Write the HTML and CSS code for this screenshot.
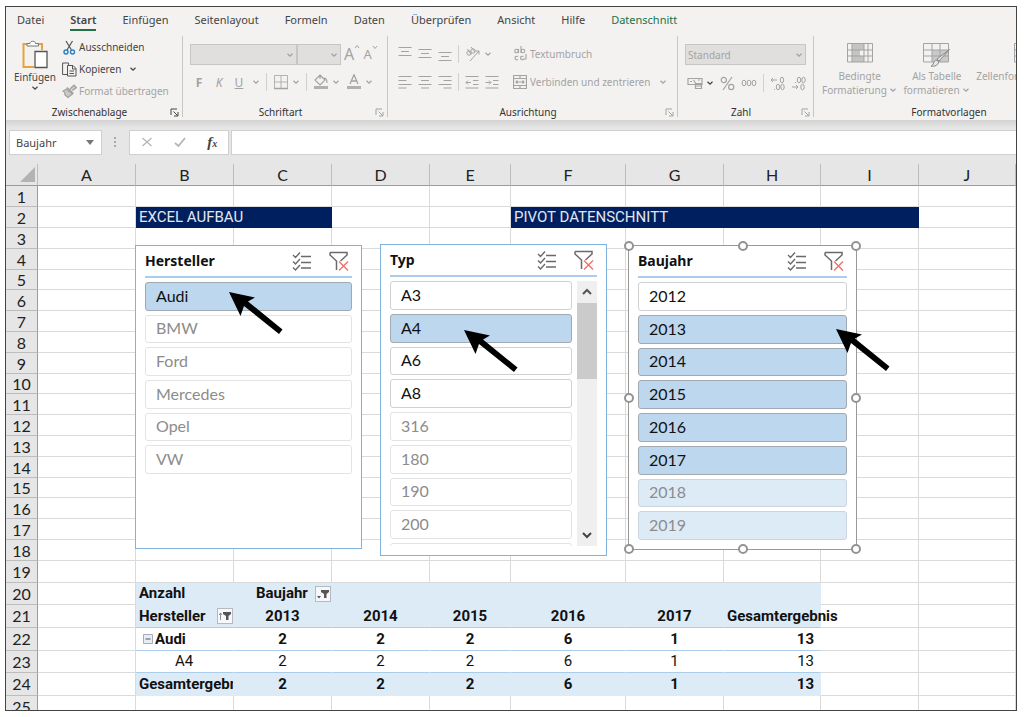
FILE: index.html
```html
<!DOCTYPE html>
<html lang="de">
<head>
    <meta charset="UTF-8">
    <meta name="viewport" content="width=device-width, initial-scale=1.0">
    <title>Pivot Datenschnitt</title>
    <link rel="stylesheet" href="styles.css">
</head>
<body>

    <!-- Shared icons -->
    <svg class="defs" width="0" height="0">
        <symbol id="chev" viewBox="0 0 8 8"><path d="M1.5 2.8 4 5.2 6.500 2.800" fill="none" stroke="currentColor" stroke-width="1.3"/></symbol>
        <symbol id="launch" viewBox="0 0 9 9"><path d="M1 7V1h6M3.500 3.500 7.500 7.500M8 4v4H4" fill="none" stroke="currentColor"/></symbol>
        <symbol id="multi" viewBox="0 0 20 20"><path d="M1 4l2.500 2.500L8 1.500M1 10.500 3.500 13 8 8M1 16.500 3.500 19 8 14M9 5.500h10M9 11.500h10M9 17h10" fill="none" stroke="#6a6a6a" stroke-width="1.400"/></symbol>
        <symbol id="clear" viewBox="0 0 20 20"><path d="M1 1.500h17v2.500l-6.500 6M1 1.500V4l6.500 6v9" fill="none" stroke="#6a6a6a" stroke-width="1.500"/><path d="M10 10.500l9 9M19 10.500l-9 9" stroke="#f4706a" stroke-width="1.400"/></symbol>
        <symbol id="arrow" viewBox="0 0 54 43"><path d="M0 0 26 5.500 19 9.500 53.500 37.500 50 42 15 14 11.500 24Z" fill="#000"/></symbol>
    </svg>

    <div class="window">
        <nav class="tabs">
            <a href="#">Datei</a>
            <a href="#" class="active">Start</a>
            <a href="#">Einfügen</a>
            <a href="#">Seitenlayout</a>
            <a href="#">Formeln</a>
            <a href="#">Daten</a>
            <a href="#">Überprüfen</a>
            <a href="#">Ansicht</a>
            <a href="#">Hilfe</a>
            <a href="#" class="context">Datenschnitt</a>
        </nav>

        <div class="ribbon">
            <section class="group clipboard">
                <div class="tools">
                    <button type="button" class="big-button dark">
                        <svg width="26" height="30" viewBox="0 0 26 30"><path d="M6 4H1.500v23H12M15 4h5v6" fill="none" stroke="#e8a33d" stroke-width="2"/><path d="M5 6V3.500h3C8 .5 13.500.5 13.500 3.500h3V6Z" fill="#fff" stroke="#777"/><path d="M13 11.500h12v16H13z" fill="#fff" stroke="#555" stroke-width="1.300"/></svg>
                        <span>Einfügen</span>
                        <svg width="8" height="8"><use href="#chev"/></svg>
                    </button>
                    <div class="button-list">
                        <button type="button" class="dark"><svg width="15" height="15" viewBox="0 0 15 15"><path d="M4 1l5.500 9M10.500 1 5 10" stroke="#555" stroke-width="1.200"/><g fill="none" stroke="#2b7fc3" stroke-width="1.400"><circle cx="4" cy="12" r="2"/><circle cx="10.500" cy="12" r="2"/></g></svg>Ausschneiden</button>
                        <button type="button" class="dark"><svg width="15" height="15" viewBox="0 0 15 15"><path d="M5.500 12.500H.6V1h6v2" fill="none" stroke="#555"/><path d="M5.500 3.500h5.500l3 3v7.500H5.500zM10.500 4v3H14M7.500 9H12M7.500 11.500H12" fill="none" stroke="#555"/></svg>Kopieren<svg class="drop" width="8" height="8"><use href="#chev"/></svg></button>
                        <button type="button" disabled><svg width="15" height="15" viewBox="0 0 15 15"><path d="M8 5l4-4 2.500 2.500-4 3M5 3.500l6.500 6M4.500 5 1 7c2 .5 1.500 2 2 4l3 2.500 4.500-3.500Z" fill="#c8c8c8" stroke="#a0a0a0" stroke-width="1.200"/></svg>Format übertragen</button>
                    </div>
                </div>
                <footer class="dark-launch"><span>Zwischenablage</span><svg width="9" height="9"><use href="#launch"/></svg></footer>
            </section>

            <section class="group font">
                <div class="tools rows">
                    <div class="line flush">
                        <div class="select-box font-name"><select disabled aria-label="Schriftart"><option></option></select><svg width="8" height="8"><use href="#chev"/></svg></div>
                        <div class="select-box font-size"><select disabled aria-label="Schriftgrad"><option></option></select><svg width="8" height="8"><use href="#chev"/></svg></div>
                        <button type="button" class="grow" disabled>A<svg width="6" height="6" viewBox="0 0 6 6"><path d="M1 4l2-2.500L5 4" fill="none" stroke="currentColor"/></svg></button>
                        <button type="button" class="grow small" disabled>A<svg width="6" height="6" viewBox="0 0 6 6"><path d="M1 2l2 2.500L5 2" fill="none" stroke="currentColor"/></svg></button>
                    </div>
                    <div class="line">
                        <button type="button" class="letter bold" disabled>F</button>
                        <button type="button" class="letter italic" disabled>K</button>
                        <button type="button" class="letter underline" disabled>U</button>
                        <svg width="8" height="8"><use href="#chev"/></svg>
                        <i class="sep"></i>
                        <button type="button" class="split" disabled><svg width="16" height="16" viewBox="0 0 16 16"><path d="M1.500 1.500h13v13h-13zM8 1.500v13M1.500 8h13" fill="none" stroke="currentColor" stroke-width=".8"/><path d="M1 14.500h14" stroke="currentColor" stroke-width="1.500"/></svg><svg width="8" height="8"><use href="#chev"/></svg></button>
                        <i class="sep"></i>
                        <button type="button" class="split" disabled><svg width="16" height="16" viewBox="0 0 16 16"><path d="M7 1l5 5-5 5-5-5ZM7 1v4M11 4c2 0 3 2 3 5" fill="none" stroke="currentColor" stroke-width="1.200"/><path d="M1 12h14v3H1z" fill="#b0b0b0"/></svg><svg width="8" height="8"><use href="#chev"/></svg></button>
                        <button type="button" class="split" disabled><svg width="16" height="16" viewBox="0 0 16 16"><path d="M4 10 8 .8 12 10M5.500 7h5" fill="none" stroke="currentColor" stroke-width="1.300"/><path d="M1 12h14v3H1z" fill="#b0b0b0"/></svg><svg width="8" height="8"><use href="#chev"/></svg></button>
                    </div>
                </div>
                <footer><span>Schriftart</span><svg width="9" height="9"><use href="#launch"/></svg></footer>
            </section>

            <section class="group align">
                <div class="tools">
                    <div class="rows">
                        <div class="line">
                            <svg width="14" height="16" viewBox="0 0 14 16"><path d="M.5 1.500h13M3 5.500h8M.5 9.500h13" stroke="currentColor"/></svg>
                            <svg width="14" height="16" viewBox="0 0 14 16"><path d="M.5 3.500h13M3 7.500h8M.5 11.500h13" stroke="currentColor"/></svg>
                            <svg width="14" height="16" viewBox="0 0 14 16"><path d="M.5 6.500h13M3 10.500h8M.5 14.500h13" stroke="currentColor"/></svg>
                            <i class="sep"></i>
                            <button type="button" class="split" disabled><svg width="16" height="16" viewBox="0 0 16 16"><g fill="none" stroke="currentColor"><circle cx="4" cy="7" r="2.200"/><path d="M2.500 3 6 8.500"/><circle cx="8" cy="5" r="2.200"/><path d="M6 1l4 5M5 15 14 5M10.500 5H14v3.500"/></g></svg><svg width="8" height="8"><use href="#chev"/></svg></button>
                        </div>
                        <div class="line">
                            <svg width="14" height="14" viewBox="0 0 14 14"><path d="M.5 1.500h13M.5 5.500h8M.5 9.500h13M.5 13h8" stroke="currentColor"/></svg>
                            <svg width="14" height="14" viewBox="0 0 14 14"><path d="M.5 1.500h13M3 5.500h8M.5 9.500h13M3 13h8" stroke="currentColor"/></svg>
                            <svg width="14" height="14" viewBox="0 0 14 14"><path d="M.5 1.500h13M5.500 5.500h8M.5 9.500h13M5.500 13h8" stroke="currentColor"/></svg>
                            <i class="sep"></i>
                            <svg width="14" height="14" viewBox="0 0 14 14"><path d="M.5 1.500h13M8 5.500h5.500M8 9.500h5.500M.5 13h13M6 7.500H1M3 5.500l-2 2 2 2" fill="none" stroke="currentColor"/></svg>
                            <svg width="14" height="14" viewBox="0 0 14 14"><path d="M.5 1.500h13M8 5.500h5.500M8 9.500h5.500M.5 13h13M.5 7.500h5M4 5.500l2 2-2 2" fill="none" stroke="currentColor"/></svg>
                        </div>
                    </div>
                    <i class="sep high"></i>
                    <div class="rows wide">
                        <button type="button" class="line" disabled><svg width="14" height="16" viewBox="0 0 14 16"><g fill="none" stroke="currentColor" stroke-width="1.100"><circle cx="3.500" cy="5" r="1.800"/><path d="M5.500 3v4M8 0v7"/><circle cx="10" cy="5" r="1.800"/><path d="M5 10.500c-4-1.500-4 4.500 0 3M10.500 10.500c-4-1.500-4 4.500 0 3M13 8v5H9.500"/></g></svg>Textumbruch</button>
                        <button type="button" class="line" disabled><svg width="14" height="14" viewBox="0 0 14 14"><path d="M.5.5h13v13H.5zM.5 3.500h13M.5 10.500h13M7 .5v3M7 10.500v3M3 7h8M4.500 5.500 3 7l1.500 1.500M9.500 5.500 11 7 9.500 8.500" fill="none" stroke="currentColor" stroke-width="1.200"/></svg>Verbinden und zentrieren<svg class="drop" width="8" height="8"><use href="#chev"/></svg></button>
                    </div>
                </div>
                <footer><span>Ausrichtung</span><svg width="9" height="9"><use href="#launch"/></svg></footer>
            </section>

            <section class="group number">
                <div class="tools rows">
                    <div class="select-box number-format"><select disabled aria-label="Zahlenformat"><option>Standard</option></select><svg width="8" height="8"><use href="#chev"/></svg></div>
                    <div class="line">
                        <button type="button" class="split" disabled><svg width="16" height="14" viewBox="0 0 16 14"><path d="M1 2.500h14v6H1zM3 5.500h2M6.500 4l2 3M11 4h2M8.500 7.500h6v5h-6zM8.500 10h6" fill="none" stroke="currentColor" stroke-width="1.200"/></svg><svg class="dark" width="8" height="8"><use href="#chev"/></svg></button>
                        <svg width="15" height="15" viewBox="0 0 15 15"><g fill="none" stroke="currentColor" stroke-width="1.200"><circle cx="3.800" cy="4" r="2.600"/><circle cx="11.200" cy="11" r="2.600"/><path d="M12 1 3 14"/></g></svg>
                        <svg width="16" height="8" viewBox="0 0 16 8"><g fill="none" stroke="currentColor"><ellipse cx="3" cy="4" rx="1.900" ry="2.800"/><ellipse cx="8" cy="4" rx="1.900" ry="2.800"/><ellipse cx="13" cy="4" rx="1.900" ry="2.800"/></g></svg>
                        <i class="sep"></i>
                        <svg width="15" height="15" viewBox="0 0 15 15"><g fill="none" stroke="currentColor"><path d="M7 4H1M3 2 1 4l2 2M4 13.500h1"/><ellipse cx="12" cy="4" rx="1.700" ry="2.800"/><ellipse cx="8" cy="11" rx="1.700" ry="2.800"/><ellipse cx="12.500" cy="11" rx="1.700" ry="2.800"/></g></svg>
                        <svg width="15" height="15" viewBox="0 0 15 15"><g fill="none" stroke="currentColor"><path d="M1 11h6M5 9l2 2-2 2M4 6.500h1"/><ellipse cx="8" cy="4" rx="1.700" ry="2.800"/><ellipse cx="12.500" cy="4" rx="1.700" ry="2.800"/><ellipse cx="11.500" cy="11" rx="1.700" ry="2.800"/></g></svg>
                    </div>
                </div>
                <footer><span>Zahl</span><svg width="9" height="9"><use href="#launch"/></svg></footer>
            </section>

            <section class="group styles">
                <div class="tools">
                    <button type="button" class="big-button" disabled>
                        <svg width="26" height="26" viewBox="0 0 26 26"><path d="M5 3h12v6H5zM5 9h8v6H5zM5 15h12v6H5z" fill="#c4c4c4"/><path d="M.5 2.500h25v18.500H.5zM.5 9h25M.5 15h25M5 2.500V21M17 2.500V21M21 2.500V21" fill="none" stroke="currentColor"/></svg>
                        <span>Bedingte<br>Formatierung <svg width="8" height="8"><use href="#chev"/></svg></span>
                    </button>
                    <button type="button" class="big-button" disabled>
                        <svg width="28" height="26" viewBox="0 0 28 26"><path d="M9 9h16v12H9z" fill="#c9c9c9"/><path d="M.5 2.500h25V21H.5zM.5 9h25M.5 15h25M9 2.500V21M17 2.500V21" fill="none" stroke="currentColor"/><path d="M26.500 8.500 16 20l-2-2ZM8 25c3 0 2-6 6-6l1.500 2c0 3-4 5-7.500 4Z" fill="#e8e8e8" stroke="#888"/></svg>
                        <span>Als Tabelle<br>formatieren <svg width="8" height="8"><use href="#chev"/></svg></span>
                    </button>
                    <button type="button" class="big-button" disabled>
                        <svg width="26" height="26" viewBox="0 0 26 26"><path d="M.5 2.500h25V21H.5zM.5 9h25M.5 15h25M5 2.500V21M21 2.500V21" fill="none" stroke="currentColor"/></svg>
                        <span>Zellenformatvorlagen</span>
                    </button>
                </div>
                <footer><span>Formatvorlagen</span></footer>
            </section>
        </div>

        <div class="formula-bar">
            <label class="name-box">
                <input type="text" value="Baujahr" aria-label="Namenfeld">
                <svg width="8" height="5" viewBox="0 0 8 5"><path d="M0 0h8L4 5Z" fill="#777"/></svg>
            </label>
            <svg class="dots" width="3" height="12" viewBox="0 0 3 12"><path d="M0 1h2v2H0zM0 5h2v2H0zM0 9h2v2H0z" fill="#aaa"/></svg>
            <div class="formula-buttons">
                <button type="button" aria-label="Abbrechen"><svg width="12" height="12" viewBox="0 0 12 12"><path d="M1.500 2l9 8M10.500 2l-9 8" stroke="#b5b5b5" stroke-width="1.300"/></svg></button>
                <button type="button" aria-label="Eingeben"><svg width="12" height="12" viewBox="0 0 12 12"><path d="M1 7l3.500 3L11 2" fill="none" stroke="#b5b5b5" stroke-width="1.800"/></svg></button>
                <button type="button" class="fx">f<sub>x</sub></button>
            </div>
            <input type="text" class="formula" aria-label="Bearbeitungsleiste">
        </div>

        <div class="sheet">
            <table>
                <colgroup>
                    <col class="c-num"><col class="c-std"><col class="c-std"><col class="c-std"><col class="c-std">
                    <col class="c-e"><col class="c-f"><col class="c-std"><col class="c-h"><col class="c-std"><col>
                </colgroup>
                <thead>
                    <tr><th class="corner"><svg width="15" height="15" viewBox="0 0 15 15"><path d="M15 0v15H0Z" fill="#b3b3b3"/></svg></th><th>A</th><th>B</th><th>C</th><th>D</th><th>E</th><th>F</th><th>G</th><th>H</th><th>I</th><th>J</th></tr>
                </thead>
                <tbody>
                    <tr><th>1</th><td></td><td></td><td></td><td></td><td></td><td></td><td></td><td></td><td></td><td></td></tr>
                    <tr><th>2</th><td></td><td colspan="2" class="banner">EXCEL AUFBAU</td><td></td><td></td><td colspan="4" class="banner">PIVOT DATENSCHNITT</td><td></td></tr>
                    <tr><th>3</th><td></td><td></td><td></td><td></td><td></td><td></td><td></td><td></td><td></td><td></td></tr>
                    <tr><th>4</th><td></td><td></td><td></td><td></td><td></td><td></td><td></td><td></td><td></td><td></td></tr>
                    <tr><th>5</th><td></td><td></td><td></td><td></td><td></td><td></td><td></td><td></td><td></td><td></td></tr>
                    <tr><th>6</th><td></td><td></td><td></td><td></td><td></td><td></td><td></td><td></td><td></td><td></td></tr>
                    <tr><th>7</th><td></td><td></td><td></td><td></td><td></td><td></td><td></td><td></td><td></td><td></td></tr>
                    <tr><th>8</th><td></td><td></td><td></td><td></td><td></td><td></td><td></td><td></td><td></td><td></td></tr>
                    <tr><th>9</th><td></td><td></td><td></td><td></td><td></td><td></td><td></td><td></td><td></td><td></td></tr>
                    <tr><th>10</th><td></td><td></td><td></td><td></td><td></td><td></td><td></td><td></td><td></td><td></td></tr>
                    <tr><th>11</th><td></td><td></td><td></td><td></td><td></td><td></td><td></td><td></td><td></td><td></td></tr>
                    <tr><th>12</th><td></td><td></td><td></td><td></td><td></td><td></td><td></td><td></td><td></td><td></td></tr>
                    <tr><th>13</th><td></td><td></td><td></td><td></td><td></td><td></td><td></td><td></td><td></td><td></td></tr>
                    <tr><th>14</th><td></td><td></td><td></td><td></td><td></td><td></td><td></td><td></td><td></td><td></td></tr>
                    <tr><th>15</th><td></td><td></td><td></td><td></td><td></td><td></td><td></td><td></td><td></td><td></td></tr>
                    <tr><th>16</th><td></td><td></td><td></td><td></td><td></td><td></td><td></td><td></td><td></td><td></td></tr>
                    <tr><th>17</th><td></td><td></td><td></td><td></td><td></td><td></td><td></td><td></td><td></td><td></td></tr>
                    <tr><th>18</th><td></td><td></td><td></td><td></td><td></td><td></td><td></td><td></td><td></td><td></td></tr>
                    <tr class="mid"><th>19</th><td></td><td></td><td></td><td></td><td></td><td></td><td></td><td></td><td></td><td></td></tr>
                    <tr class="mid pivot head top"><th>20</th><td></td><td>Anzahl</td><td><div class="field">Baujahr <button type="button" aria-label="Baujahr filtern"><svg width="12" height="10" viewBox="0 0 12 10"><path d="M4 1h8v2L9.500 5v4H7V5L4 3ZM0 7h4L2 9.500Z" fill="#555"/></svg></button></div></td><td></td><td></td><td></td><td></td><td></td><td></td><td></td></tr>
                    <tr class="tall pivot head"><th>21</th><td></td><td><div class="field">Hersteller <button type="button" aria-label="Hersteller filtern"><svg width="12" height="10" viewBox="0 0 12 10"><path d="M4 1h8v2L9.500 5v4H7V5L4 3Z" fill="#555"/><path d="M1.500 9V2M0 4l1.500-2L3 4" fill="none" stroke="#777" stroke-width=".8"/></svg></button></div></td><td>2013</td><td>2014</td><td>2015</td><td>2016</td><td>2017</td><td class="spill">Gesamtergebnis</td><td></td><td></td></tr>
                    <tr class="tall pivot strong"><th>22</th><td></td><td><button type="button" class="collapse" aria-label="Reduzieren"><svg width="10" height="10" viewBox="0 0 10 10"><path d="M.5.5h9v9h-9z" fill="#e8ecf5" stroke="#a5acbd"/><path d="M2.500 5h5" stroke="#44546a"/></svg></button>Audi</td><td>2</td><td>2</td><td>2</td><td>6</td><td>1</td><td>13</td><td></td><td></td></tr>
                    <tr class="mid pivot"><th>23</th><td></td><td class="indent">A4</td><td>2</td><td>2</td><td>2</td><td>6</td><td>1</td><td>13</td><td></td><td></td></tr>
                    <tr class="tall pivot head total"><th>24</th><td></td><td>Gesamtergebnis</td><td>2</td><td>2</td><td>2</td><td>6</td><td>1</td><td>13</td><td></td><td></td></tr>
                    <tr class="tall"><th>25</th><td></td><td></td><td></td><td></td><td></td><td></td><td></td><td></td><td></td><td></td></tr>
                </tbody>
            </table>

            <!-- Floating slicers -->
            <div class="slicer slicer-maker">
                <header><h2>Hersteller</h2><button type="button" aria-label="Mehrfachauswahl"><svg width="20" height="20"><use href="#multi"/></svg></button><button type="button" aria-label="Filter löschen"><svg width="20" height="20"><use href="#clear"/></svg></button></header>
                <div class="items">
                    <button type="button" class="on">Audi</button>
                    <button type="button" class="empty">BMW</button>
                    <button type="button" class="empty">Ford</button>
                    <button type="button" class="empty">Mercedes</button>
                    <button type="button" class="empty">Opel</button>
                    <button type="button" class="empty">VW</button>
                </div>
            </div>

            <div class="slicer slicer-type">
                <header><h2>Typ</h2><button type="button" aria-label="Mehrfachauswahl"><svg width="20" height="20"><use href="#multi"/></svg></button><button type="button" aria-label="Filter löschen"><svg width="20" height="20"><use href="#clear"/></svg></button></header>
                <div class="scroll-area">
                    <div class="items">
                        <button type="button">A3</button>
                        <button type="button" class="on">A4</button>
                        <button type="button">A6</button>
                        <button type="button">A8</button>
                        <button type="button" class="empty">316</button>
                        <button type="button" class="empty">180</button>
                        <button type="button" class="empty">190</button>
                        <button type="button" class="empty">200</button>
                        <button type="button" class="empty" aria-label="weitere"></button>
                    </div>
                    <div class="scrollbar">
                        <button type="button" aria-label="Nach oben"><svg width="12" height="12" viewBox="0 0 12 12"><path d="M2 8l4-4 4 4" fill="none" stroke="#555" stroke-width="2"/></svg></button>
                        <div class="thumb"></div>
                        <button type="button" aria-label="Nach unten"><svg width="12" height="12" viewBox="0 0 12 12"><path d="M2 4l4 4 4-4" fill="none" stroke="#444" stroke-width="2"/></svg></button>
                    </div>
                </div>
            </div>

            <div class="slicer slicer-year">
                <header><h2>Baujahr</h2><button type="button" aria-label="Mehrfachauswahl"><svg width="20" height="20"><use href="#multi"/></svg></button><button type="button" aria-label="Filter löschen"><svg width="20" height="20"><use href="#clear"/></svg></button></header>
                <div class="items">
                    <button type="button">2012</button>
                    <button type="button" class="on">2013</button>
                    <button type="button" class="on">2014</button>
                    <button type="button" class="on">2015</button>
                    <button type="button" class="on">2016</button>
                    <button type="button" class="on">2017</button>
                    <button type="button" class="on empty">2018</button>
                    <button type="button" class="on empty">2019</button>
                </div>
                <i class="handle nw"></i><i class="handle n"></i><i class="handle ne"></i>
                <i class="handle w"></i><i class="handle e"></i>
                <i class="handle sw"></i><i class="handle s"></i><i class="handle se"></i>
            </div>

            <svg class="pointer pointer-maker" width="54" height="43"><use href="#arrow"/></svg>
            <svg class="pointer pointer-type" width="54" height="43"><use href="#arrow"/></svg>
            <svg class="pointer pointer-year" width="54" height="43"><use href="#arrow"/></svg>
        </div>
    </div>

</body>
</html>
```

FILE: styles.css
```css
* {
    box-sizing: border-box;
}

body {
    margin: 0;
    padding: 6px 7px 6px 5px;
    height: 100vh;
    background: #fff;
    font-family: "Noto Sans", sans-serif;
    font-size: 10px;
    color: #444;
}

button,
input,
select {
    font: inherit;
    color: inherit;
    margin: 0;
    padding: 0;
    border: none;
    background: none;
}

svg {
    display: block;
    flex: none;
}

.defs {
    position: absolute;
}

.window {
    display: flex;
    flex-direction: column;
    height: 100%;
    border: 1px solid #444;
    overflow: hidden;
}

/* Tabs */
.tabs {
    display: flex;
    flex: none;
    gap: 26px;
    height: 29px;
    padding: 4px 11px;
    background: #f3f2f1;
    font-size: 11px;
    line-height: 18px;
}

.tabs a {
    color: #444;
    text-decoration: none;
    height: 20px;
}

.tabs .active {
    font-weight: 600;
    border-bottom: 2px solid #217346;
}

.tabs .context {
    color: #217346;
}

/* Ribbon */
.ribbon {
    display: flex;
    flex: none;
    height: 84px;
    background: #f3f2f1;
    color: #a3a3a3;
    overflow: hidden;
}

.group {
    display: flex;
    flex-direction: column;
    flex: none;
    height: 81px;
    border-right: 1px solid #c8c6c4;
}

.clipboard { width: 177px; }
.font { width: 205px; }
.align { width: 290px; }
.number { width: 136px; }
.styles { width: 271px; }

.group footer {
    display: flex;
    align-items: center;
    height: 10px;
    padding: 0 3px;
    line-height: 10px;
}

.group footer span {
    flex: 1;
    text-align: center;
    color: #333;
}

.dark,
.dark-launch {
    color: #444;
}

.tools {
    display: flex;
    flex: 1;
    padding: 0 8px;
}

.rows {
    display: flex;
    flex-direction: column;
    gap: 8px;
    padding-top: 8px;
}

.tools.rows {
    padding: 8px 7px 0;
}

.align .tools {
    padding: 0 10px;
}

.line {
    display: flex;
    flex: none;
    align-items: center;
    gap: 6px;
    height: 20px;
    white-space: nowrap;
}

.tools > .line:last-child {
    padding-left: 2px;
}

.flush {
    gap: 0;
}

.sep {
    width: 1px;
    height: 18px;
    background: #d2d0ce;
}

.sep.high {
    height: 54px;
    margin: 6px 6px 0 8px;
}

.big-button {
    display: flex;
    flex-direction: column;
    align-items: center;
    line-height: 14px;
    white-space: nowrap;
}

.big-button span svg {
    display: inline-block;
}

.clipboard .big-button {
    width: 42px;
    padding-top: 4px;
}

.clipboard .button-list {
    padding-left: 6px;
}

.button-list button {
    display: flex;
    align-items: center;
    gap: 2px;
    height: 22px;
    white-space: nowrap;
}

.drop {
    margin-left: 6px;
}

.select-box {
    display: flex;
    flex: none;
    position: relative;
    height: 21px;
    background: #e0dfde;
    border: 1px solid #c8c6c4;
}

.select-box select {
    appearance: none;
    width: 100%;
    padding: 0 2px;
    opacity: 1;
}

.select-box svg {
    position: absolute;
    right: 2px;
    top: 6px;
}

.font-name { width: 107px; }
.font-size { width: 44px; }
.number-format { width: 121px; }

.grow {
    display: flex;
    width: 20px;
    padding-left: 3px;
    font-size: 16px;
    line-height: 20px;
}

.grow.small {
    font-size: 13px;
}

.letter {
    width: 14px;
    font-size: 12px;
}

.bold { font-weight: bold; }
.italic { font-style: italic; }
.underline { text-decoration: underline; }

.split {
    display: flex;
    align-items: center;
    gap: 3px;
}

.wide .line {
    gap: 3px;
}

.styles .tools {
    gap: 6px;
}

.styles .big-button {
    padding-top: 5px;
}

.styles .big-button > svg {
    margin-bottom: 2px;
}

/* Formula bar */
.formula-bar {
    display: flex;
    flex: none;
    align-items: center;
    height: 44px;
    background: linear-gradient(#d2d2d2, #e6e6e6 8px);
    padding-left: 3px;
}

.name-box,
.formula-buttons,
.formula {
    display: flex;
    align-items: center;
    height: 25px;
    background: #fff;
    border: 1px solid #cfcfcf;
}

.name-box {
    width: 93px;
    padding: 0 7px 0 6px;
    font-size: 11px;
}

.name-box input {
    flex: 1;
    min-width: 0;
}

.dots {
    margin: 0 12px;
}

.formula-buttons {
    width: 100px;
    justify-content: space-around;
}

.fx {
    font: italic bold 15px "Liberation Serif", serif;
}

.fx sub {
    font-size: 10px;
    vertical-align: baseline;
}

.formula {
    flex: 1;
    margin-left: 2px;
    border-right: none;
}

/* Sheet */
.sheet {
    position: relative;
    flex: 1;
    min-height: 0;
    overflow: hidden;
}

table {
    width: 100%;
    table-layout: fixed;
    border-collapse: separate;
    border-spacing: 0;
    color: #111;
}

.c-num { width: 32px; }
.c-std { width: 98px; }
.c-e { width: 81px; }
.c-f { width: 115px; }
.c-h { width: 97px; }

th,
td {
    height: 21px;
    padding: 0;
    line-height: 19px;
    border-right: 1px solid #dadada;
    border-bottom: 1px solid #dadada;
}

th {
    background: #e6e6e6;
    color: #222;
    font-family: Lato, sans-serif;
    font-size: 16px;
    font-weight: normal;
    border-color: #bdbdbd;
}

thead th {
    height: 22px;
    border-bottom-color: #9b9b9b;
}

tbody th {
    border-right-color: #9b9b9b;
}

.corner svg {
    margin-left: 14px;
}

tbody tr:nth-child(5n) > * {
    height: 20px;
    line-height: 18px;
}

tbody tr.mid > * {
    height: 22px;
    line-height: 21px;
}

tbody tr.tall > * {
    height: 23px;
    line-height: 22px;
}

td {
    font-family: Roboto, sans-serif;
    font-size: 15px;
    white-space: nowrap;
    overflow: hidden;
}

.banner {
    background: #001f5f;
    border-color: #001f5f;
    color: #e3e6ee;
    padding-left: 3px;
}

/* Pivot table */
.pivot td:nth-child(n+3):nth-child(-n+9) {
    border-right-color: transparent;
    border-bottom-color: #a9cdea;
}

.pivot td:nth-child(n+4) {
    text-align: center;
}

.pivot td:nth-child(3) {
    padding-left: 3px;
}

.pivot:not(.top) td:nth-child(9) {
    text-align: right;
    padding-right: 6px;
}

.head td:nth-child(n+3):nth-child(-n+9) {
    background: #ddebf7;
    font-weight: bold;
}

.top td:nth-child(n+3):nth-child(-n+9),
.total td:nth-child(n+3):nth-child(-n+9) {
    border-bottom-color: #ddebf7;
}

.strong td {
    font-weight: bold;
}

.pivot:not(.top) .spill:nth-child(9) {
    overflow: visible;
    text-align: left;
    padding: 0 0 0 3px;
}

.pivot .indent:nth-child(3) {
    padding-left: 39px;
}

.field {
    display: flex;
    align-items: center;
    justify-content: space-between;
}

td:nth-child(4) .field {
    padding-left: 22px;
}

.field button {
    padding: 2px 1px;
    background: #f5f7fa;
    border: 1px solid #b5bac2;
}

.collapse {
    padding: 0 2px 0 4px;
}

.collapse svg {
    display: inline-block;
}

/* Slicers */
.slicer {
    position: absolute;
    display: flex;
    flex-direction: column;
    width: 227px;
    padding: 5px 9px 9px;
    background: #fff;
    border: 1px solid #7fb2df;
    font-family: Lato, sans-serif;
    font-size: 16px;
    color: #111;
}

.slicer-maker { left: 129px; top: 81px; height: 304px; }
.slicer-type { left: 374px; top: 80px; height: 312px; }
.slicer-year { left: 622px; top: 81px; width: 229px; height: 305px; border-color: #999; }

.slicer header {
    display: flex;
    align-items: center;
    gap: 17px;
    height: 27px;
    padding: 0 3px 5px 0;
    margin-bottom: 4px;
    border-bottom: 2px solid #a9cdea;
}

.slicer h2 {
    flex: 1;
    margin: 0;
    font-family: "Noto Sans", sans-serif;
    font-size: 14px;
    line-height: 20px;
}

.items {
    display: grid;
    flex: 1;
    grid-template-rows: repeat(8, 1fr);
    grid-auto-rows: 3px;
    gap: 4px;
    overflow: hidden;
}

.items button {
    min-height: 28px;
    padding: 0 0 2px 10px;
    text-align: left;
    border: 1px solid #d0d0d0;
    border-radius: 3px;
    background: #fff;
}

.items .on {
    background: #bdd7ee;
    border-color: #a3a9b0;
}

.items .empty {
    color: #8c8c8c;
    border-color: #e3e3e3;
}

.items .on.empty {
    background: #ddebf7;
    border-color: #ccd5dd;
}

.scroll-area {
    display: flex;
    flex: 1;
    gap: 5px;
    min-height: 0;
}

.scrollbar {
    display: flex;
    flex-direction: column;
    width: 20px;
    background: #efefef;
}

.scrollbar button {
    height: 22px;
    padding: 0 4px;
}

.scrollbar button:last-child {
    margin-top: auto;
}

.thumb {
    height: 76px;
    background: #cbcbcb;
}

/* Selection handles sit on the slicer outline */
.handle {
    position: absolute;
    width: 10px;
    height: 10px;
    margin: -5px;
    border: 2px solid #939393;
    border-radius: 50%;
    background: #fff;
}

.nw, .n, .ne { top: 0; }
.w, .e { top: 50%; }
.sw, .s, .se { top: 100%; }
.nw, .w, .sw { left: 0; }
.n, .s { left: 50%; }
.ne, .e, .se { left: 100%; }

.pointer {
    position: absolute;
}

.pointer-maker { left: 223px; top: 128px; }
.pointer-type { left: 458px; top: 166px; }
.pointer-year { left: 830px; top: 165px; }
```
